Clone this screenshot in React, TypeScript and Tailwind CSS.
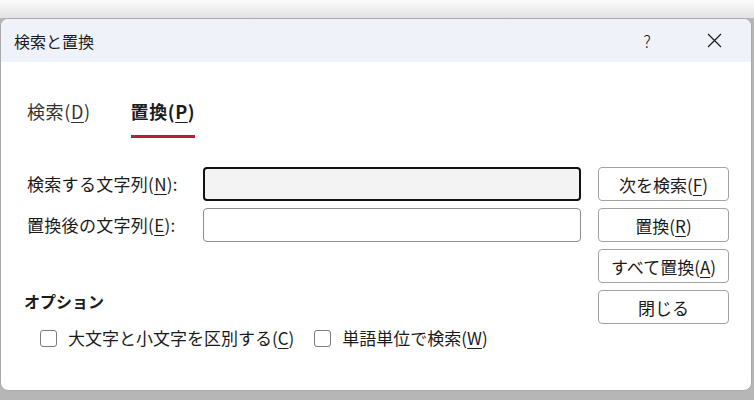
import React from "react";

const font = { fontFamily: '"Noto Sans CJK JP", "Noto Sans", sans-serif' };

function Acc({ k }: { k: string }) {
  return (
    <>
      (<span className="underline underline-offset-[3px] decoration-1">{k}</span>)
    </>
  );
}

function Btn({ children }: { children: React.ReactNode }) {
  return (
    <button className="h-[34px] w-[131px] rounded-[4px] border border-[#a2a2a2] bg-white text-[17px] leading-none text-[#1b1b1b] flex items-center justify-center">
      {children}
    </button>
  );
}

function Check({ children }: { children: React.ReactNode }) {
  return (
    <label className="flex items-center gap-[11px]">
      <span className="h-[17px] w-[17px] rounded-[3px] border border-[#7c7c7c] bg-white" />
      <span>{children}</span>
    </label>
  );
}

export default function App() {
  return (
    <div style={font} className="flex h-[400px] w-[754px] flex-col bg-[#b6b6b6] text-[#1b1b1b]">
      <div className="h-[18px] shrink-0 bg-gradient-to-b from-[#fbfbfb] to-[#e3e3e3]" />
      <div className="flex h-[373px] w-[752px] shrink-0 flex-col overflow-hidden rounded-[8px] border border-[#a9a9a9] bg-white">
        {/* title bar */}
        <div className="flex h-[43px] shrink-0 items-center bg-[#eff2f9] pl-[13px]">
          <span className="text-[16px]">検索と置換</span>
          <span className="ml-auto mr-[56px] text-[17px] font-light">?</span>
          <svg width="15" height="15" viewBox="0 0 15 15" className="mr-[29px]">
            <path d="M1 1 L14 14 M14 1 L1 14" stroke="#1b1b1b" strokeWidth="1.2" fill="none" />
          </svg>
        </div>

        {/* body */}
        <div className="flex flex-col pl-[26px] pt-[37px]">
          {/* tabs */}
          <div className="flex gap-[40px] text-[18px] leading-[25px] tracking-[0.6px]">
            <div className="flex flex-col">
              <span className="text-[#333]">検索<Acc k="D" /></span>
            </div>
            <div className="flex flex-col">
              <span className="font-bold">置換<Acc k="P" /></span>
              <span className="mt-[11px] h-[3px] w-full bg-[#b3203a]" />
            </div>
          </div>

          <div className="mt-[29px] flex items-start">
            <div className="flex flex-col text-[17px]">
              <div className="flex h-[34px] items-center">
                <span className="w-[176px] tracking-[0.3px]">検索する文字列<Acc k="N" />:</span>
                <div className="h-[34px] w-[378px] rounded-[4px] border-2 border-[#111] bg-[#f3f3f3]" />
              </div>
              <div className="mt-[7px] flex h-[34px] items-center">
                <span className="w-[176px] tracking-[0.3px]">置換後の文字列<Acc k="E" />:</span>
                <div className="h-[34px] w-[378px] rounded-[4px] border border-[#8c8c8c] bg-white" />
              </div>
              <div className="-ml-[3px] mt-[48px] text-[16px] font-bold leading-[22px]">オプション</div>
              <div className="ml-[13px] mt-[15px] flex gap-[20px] leading-[22px]">
                <Check>
                  大文字と小文字を区別する<Acc k="C" />
                </Check>
                <Check>
                  単語単位で検索<Acc k="W" />
                </Check>
              </div>
            </div>

            <div className="ml-[17px] flex flex-col gap-[7px]">
              <Btn>次を検索<Acc k="F" /></Btn>
              <Btn>置換<Acc k="R" /></Btn>
              <Btn>すべて置換<Acc k="A" /></Btn>
              <Btn>閉じる</Btn>
            </div>
          </div>
        </div>
      </div>
    </div>
  );
}
